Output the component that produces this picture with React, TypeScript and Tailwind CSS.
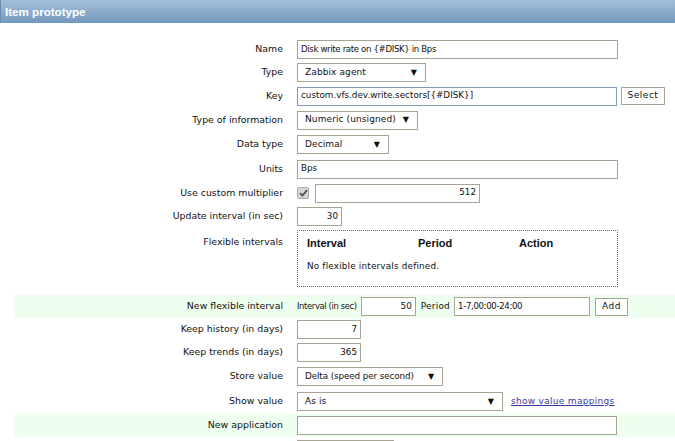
import React from "react";

const inputBorder = "border border-[#a7a493]";

function Row({label, children, green, h, top}: {label: string; children?: React.ReactNode; green?: boolean; h: string; top?: boolean}) {
  return (
    <div className={`flex ${h} ${green ? "bg-[#efffef]" : ""} ${top ? "items-start" : "items-center"}`}>
      <div className={`w-[276px] shrink-0 text-right pr-[7px] text-[9.4px] text-[#111] ${top ? "pt-[7px]" : ""}`}>
        {label}
      </div>
      <div className={`flex items-center pl-[7px] ${top ? "pt-[2px]" : ""}`}>{children}</div>
    </div>
  );
}

function TextBox({w, value, right, blue, tight}: {w: string; value?: string; right?: boolean; blue?: boolean; tight?: boolean}) {
  return (
    <div
      className={`${w} h-[19px] bg-white flex items-center px-[3px] text-[#111] ${tight ? "text-[8.6px] tracking-[-0.35px]" : "text-[8.8px]"} ${right ? "justify-end" : ""} ${blue ? "border border-[#7f9db9]" : inputBorder}`}
    >
      {value}
    </div>
  );
}

function Dropdown({w, value, tight}: {w: string; value: string; tight?: boolean}) {
  return (
    <div className={`${w} h-[19px] bg-white ${inputBorder} flex items-center justify-between pl-[7px] pr-[8px] text-[#111] ${tight ? "text-[8.8px] tracking-[-0.1px]" : "text-[9px] tracking-[0.1px]"}`}>
      <span>{value}</span>
      <span className="text-[8px]">▼</span>
    </div>
  );
}

function Btn({children, w}: {children: React.ReactNode; w: string}) {
  return (
    <div className={`${w} h-[18px] bg-white ${inputBorder} flex items-center justify-center text-[9px] tracking-[0.5px] text-[#111]`}>
      {children}
    </div>
  );
}

export default function App() {
  return (
    <div className="w-[675px] h-[441px] overflow-hidden bg-white" style={{fontFamily: '"DejaVu Sans", sans-serif'}}>
      {/* Header */}
      <div className="h-[23px] flex items-center pl-[4px] border-l border-[#6a8cb0] bg-gradient-to-b from-[#a6bed6] to-[#7399bf]">
        <span className="text-white font-bold text-[11.6px]" style={{fontFamily: '"Liberation Sans", Arial, sans-serif'}}>
          Item prototype
        </span>
      </div>

      <div className="pt-[14px] pl-[14px]">
        <Row label="Name" h="h-[24px]">
          <TextBox w="w-[321px]" value="Disk write rate on {#DISK} in Bps" tight />
        </Row>
        <Row label="Type" h="h-[23px]">
          <Dropdown w="w-[129px]" value="Zabbix agent" />
        </Row>
        <Row label="Key" h="h-[24px]">
          <TextBox w="w-[320px]" value="custom.vfs.dev.write.sectors[{#DISK}]" blue />
          <div className="ml-[4px]">
            <Btn w="w-[44px]">Select</Btn>
          </div>
        </Row>
        <Row label="Type of information" h="h-[24px]">
          <Dropdown w="w-[121px]" value="Numeric (unsigned)" />
        </Row>
        <Row label="Data type" h="h-[25px]">
          <Dropdown w="w-[92px]" value="Decimal" />
        </Row>
        <Row label="Units" h="h-[24px]">
          <TextBox w="w-[321px]" value="Bps" />
        </Row>
        <Row label="Use custom multiplier" h="h-[24px]">
          <div className="w-[12px] h-[12px] rounded-[2px] bg-[#d6d6d6] border border-[#a9a9a9] flex items-center justify-center">
            <svg width="9" height="8" viewBox="0 0 9 8">
              <path d="M1 4.2 L3.4 6.6 L8 1.2" stroke="#555" strokeWidth="1.8" fill="none" />
            </svg>
          </div>
          <div className="ml-[6px]">
            <TextBox w="w-[165px]" value="512" right />
          </div>
        </Row>
        <Row label="Update interval (in sec)" h="h-[23px]">
          <TextBox w="w-[45px]" value="30" right />
        </Row>
        <Row label="Flexible intervals" h="h-[67px]" top>
          <div className="w-[321px] h-[57px] border border-dotted border-[#3f6ad0] px-[9px] pt-[4px]">
            <div className="flex text-[11px] font-bold text-[#111] h-[16px] items-center" style={{fontFamily: '"Liberation Sans", Arial, sans-serif'}}>
              <span className="w-[111px]">Interval</span>
              <span className="w-[101px]">Period</span>
              <span>Action</span>
            </div>
            <div className="mt-[9px] text-[8.8px] tracking-[0.2px] text-[#111]">No flexible intervals defined.</div>
          </div>
        </Row>
        <Row label="New flexible interval" h="h-[23px]" green>
          <span className="text-[8.4px] text-[#111] tracking-[-0.35px]">Interval (in sec)</span>
          <div className="ml-[4px]">
            <TextBox w="w-[55px]" value="50" right />
          </div>
          <span className="ml-[5px] text-[9px] text-[#111] tracking-[0.2px]">Period</span>
          <div className="ml-[4px]">
            <TextBox w="w-[136px]" value="1-7,00:00-24:00" tight />
          </div>
          <div className="ml-[5px]">
            <Btn w="w-[33px]">Add</Btn>
          </div>
        </Row>
        <Row label="Keep history (in days)" h="h-[23px]">
          <TextBox w="w-[64px]" value="7" right />
        </Row>
        <Row label="Keep trends (in days)" h="h-[23px]">
          <TextBox w="w-[64px]" value="365" right />
        </Row>
        <Row label="Store value" h="h-[25px]">
          <Dropdown w="w-[146px]" value="Delta (speed per second)" tight />
        </Row>
        <Row label="Show value" h="h-[25px]">
          <Dropdown w="w-[206px]" value="As is" />
          <a className="ml-[8px] text-[9px] tracking-[0.3px] underline text-[#3b3b9c]" href="#">show value mappings</a>
        </Row>
        <Row label="New application" h="h-[23px]" green>
          <TextBox w="w-[320px]" />
        </Row>
        <div className="flex pt-[3px]">
          <div className="w-[276px] shrink-0" />
          <div className="pl-[7px]">
            <div className="w-[97px] h-[19px] border border-[#a7a493] flex justify-end">
              <div className="w-[10px] h-full bg-[#8a8a8a]" />
            </div>
          </div>
        </div>
      </div>
    </div>
  );
}
